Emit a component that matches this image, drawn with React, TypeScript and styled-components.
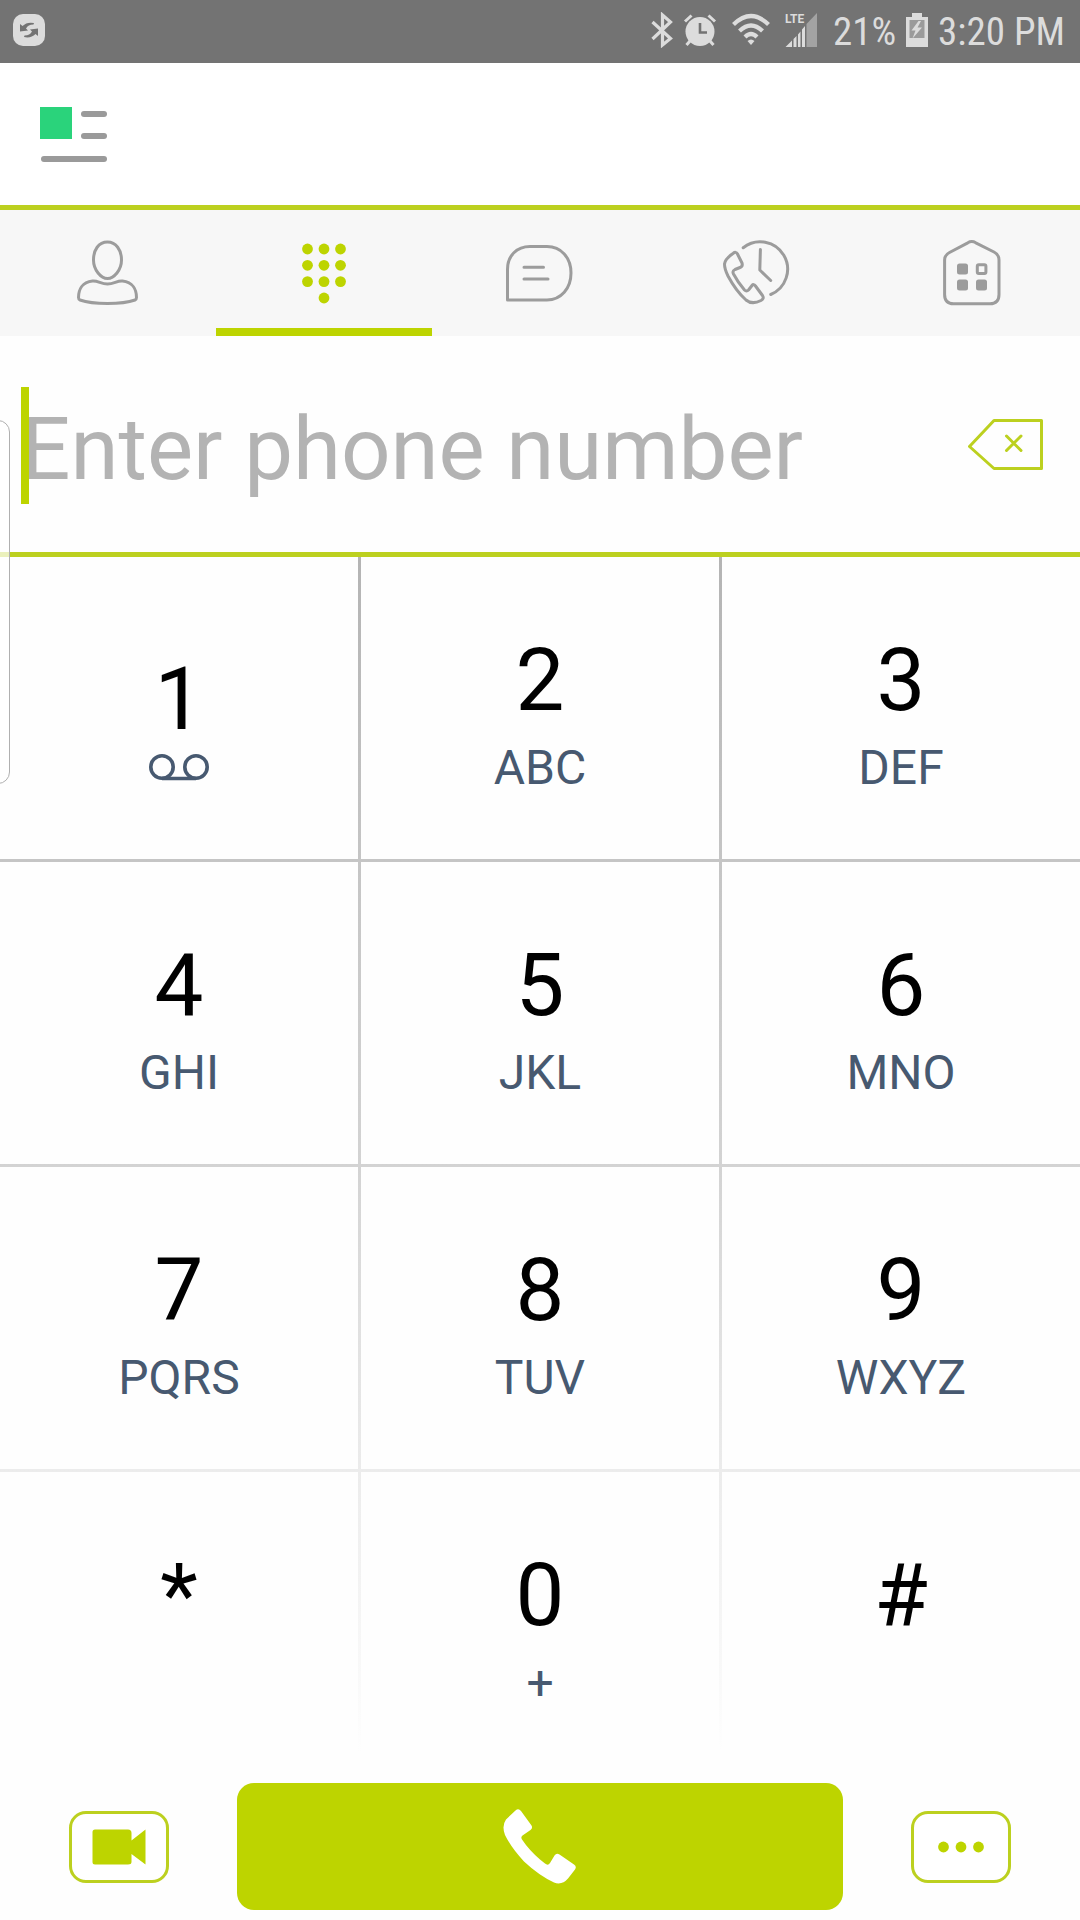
import React, { useState } from "react";
import styled, { createGlobalStyle, css } from "styled-components";

const accent = "#bdd400";
const line = "#bcd01f";
const iconGrey = "#9c9c9c";
const slate = "#475970";
const statusInk = "#dcdcdc";

const GlobalStyle = createGlobalStyle`
  *, *::before, *::after { box-sizing: border-box; }
  body { margin: 0; background: #fefefe; font-family: Roboto, "Liberation Sans", sans-serif; }
  button { margin: 0; padding: 0; border: 0; background: none; font: inherit; color: inherit; cursor: pointer; }
  svg { display: block; flex: none; }
`;

const Screen = styled.div`
  position: relative;
  display: flex;
  flex-direction: column;
  min-height: 100vh;
  overflow: hidden;
`;

const StatusBar = styled.div`
  display: flex;
  align-items: center;
  justify-content: space-between;
  height: 63px;
  padding: 0 15px 3px 13px;
  background: #737373;
  color: ${statusInk};
`;

const StatusGroup = styled.div`
  display: flex;
  align-items: center;
  gap: 10px;
`;

const StatusText = styled.span`
  padding-top: 4px;
  font-family: "Roboto Condensed", Roboto, sans-serif;
  font-size: 39px;
  line-height: 44px;
  white-space: nowrap;
`;

const SignalBox = styled.span`
  position: relative;
  margin-right: 6px;
`;

const NetworkLabel = styled.span`
  position: absolute;
  top: 0;
  left: 0;
  font-size: 12px;
  font-weight: 700;
  line-height: 12px;
`;

const Header = styled.header`
  display: flex;
  align-items: center;
  height: 147px;
  padding: 2px 40px 0;
  background: #fff;
  border-bottom: 5px solid ${line};
`;

const Tabs = styled.nav`
  display: grid;
  grid-template-columns: repeat(5, 1fr);
  background: #f7f7f7;
`;

const Tab = styled.button<{ $active?: boolean }>`
  display: flex;
  align-items: center;
  justify-content: center;
  height: 126px;
  color: ${(p) => (p.$active ? accent : iconGrey)};
  ${(p) =>
    p.$active &&
    css`
      box-shadow: inset 0 -8px 0 ${accent};
    `}
`;

const EntryRow = styled.div`
  display: flex;
  align-items: center;
  gap: 24px;
  padding: 51px 37px 48px 21px;
  border-bottom: 5px solid ${line};
`;

const Field = styled.label`
  position: relative;
  flex: 1;
  min-width: 0;
`;

const Caret = styled.span`
  position: absolute;
  top: 0;
  left: 0;
  width: 8px;
  height: 100%;
  background: ${accent};
`;

const NumberInput = styled.input`
  display: block;
  width: 100%;
  height: 117px;
  padding: 10px 0 3px;
  border: 0;
  outline: 0;
  background: transparent;
  caret-color: transparent;
  color: #000;
  font-family: inherit;
  font-size: 87px;
  line-height: 104px;
  &::placeholder {
    color: #b3b3b3;
    opacity: 1;
  }
`;

const Keypad = styled.main`
  display: grid;
  grid-template-columns: repeat(3, 1fr);
  gap: 3px;
  padding-bottom: 3px;
  background: linear-gradient(#b4b4b4 0%, #c5c5c5 25%, #d3d3d3 50%, #ececec 75%, #fefefe 98%);
`;

const Key = styled.button<{ $icon?: boolean }>`
  display: flex;
  flex-direction: column;
  align-items: center;
  justify-content: flex-start;
  gap: ${(p) => (p.$icon ? 2 : 8)}px;
  padding: ${(p) => (p.$icon ? "90px 0 0" : "71px 0 63px")};
  background: #fefefe;
`;

const Digit = styled.span`
  color: #000;
  font-size: 87px;
  line-height: 104px;
`;

const Letters = styled.span`
  color: ${slate};
  font-size: 48px;
  line-height: 56px;
`;

const Actions = styled.footer`
  display: flex;
  align-items: center;
  gap: 68px;
  padding: 6px 69px 10px;
`;

const SideButton = styled.button`
  display: flex;
  align-items: center;
  justify-content: center;
  width: 100px;
  height: 72px;
  border: 3px solid ${line};
  border-radius: 17px;
  background: #fff;
  color: ${accent};
`;

const CallButton = styled.button`
  display: flex;
  flex: 1;
  align-items: center;
  justify-content: center;
  height: 127px;
  border-radius: 17px;
  background: ${accent};
  color: #fff;
`;

const EdgeHandle = styled.div`
  position: absolute;
  top: 420px;
  left: -20px;
  width: 30px;
  height: 364px;
  border: 1px solid #b0b0b0;
  border-radius: 12px;
  background: rgba(255, 255, 255, 0.7);
`;

const stroke = {
  fill: "none",
  stroke: "currentColor",
  strokeWidth: 3,
  strokeLinecap: "round" as const,
  strokeLinejoin: "round" as const,
};

const TabIcon = ({ children }: { children: React.ReactNode }) => (
  <svg width="76" height="76" viewBox="0 0 76 76" aria-hidden="true" {...stroke}>
    {children}
  </svg>
);

const PersonIcon = () => (
  <TabIcon>
    <path d="M37.5 7C46 7 51.5 15 51.5 25C51.5 35 44 43.5 37.5 43.5C31 43.5 23.5 35 23.5 25C23.5 15 28.5 7 37.5 7Z" />
    <path d="M22.5 46C28 45.5 31 49 37.5 49C44 49 47 45.5 52.5 46C63 47 66.5 55 66.5 62.5Q66.5 64 65 65C58 67.5 48 68.5 37.5 68.5C27 68.5 17 67.5 10 65Q8.5 64 8.5 62.5C8.5 55 12 47 22.5 46Z" />
  </TabIcon>
);

const dots = [14, 30.3, 46.6].flatMap((y) => [21.5, 38, 54.5].map((x) => [x, y])).concat([[38, 63]]);

const DialpadIcon = () => (
  <TabIcon>
    {dots.map(([x, y]) => (
      <circle key={`${x}-${y}`} cx={x} cy={y} r="5.4" fill="currentColor" stroke="none" />
    ))}
  </TabIcon>
);

const ChatIcon = () => (
  <TabIcon>
    <path d="M5.5 65V34.5C5.5 20.5 15 11.5 28 11.5H45C59 11.5 69 22.500 69 38C69 53.500 59 65 45 65Z" />
    <path d="M22 32.200H41.500M22 44H46" />
  </TabIcon>
);

const HistoryIcon = () => (
  <TabIcon>
    <path d="M25.2 12.7A27.4 27.4 0 1 1 52.7 59.5" />
    <path d="M42.4 14.5L41.8 35L52.7 45.5" />
    <path d="M15 18.5Q18 16 19.5 19L24 28Q25 31.5 22 32.5L17 34.5Q14 36 15.5 39Q20 47.5 26.5 55Q28.5 57 30.5 55L34 50.5Q35.5 48.5 37.5 51L44.5 60.5Q46.5 63.5 43 65.5Q34 70 28 65Q18 56 10 41Q6.5 34 6.5 29Q7 24 15 18.5Z" />
  </TabIcon>
);

const BuildingIcon = () => (
  <TabIcon>
    <path d="M15.5 17.5L33.8 7.8Q37.8 5.4 41.8 7.8L60 17Q65 19.5 65 25V59.5Q65 68.8 56 68.8H19.5Q10.6 68.8 10.6 59.5V25Q10.6 20 15.5 17.5Z" />
    <g fill="currentColor" stroke="none">
      <rect x="23" y="28.5" width="11" height="11" rx="2.5" />
      <rect x="23" y="44.5" width="11" height="11" rx="2.5" />
      <rect x="42" y="44.5" width="11" height="11" rx="2.5" />
    </g>
    <rect x="43.3" y="29.8" width="8.6" height="8.6" rx="1.5" />
  </TabIcon>
);

const SyncIcon = () => (
  <svg width="32" height="32" viewBox="0 0 32 32" aria-hidden="true">
    <rect width="32" height="32" rx="10" fill={statusInk} />
    <g fill="#737373">
      <path d="M7 10L9.5 12Q14 7.500 21 9L20.500 10.500Q15 10.500 13 14.500L15 16.500L7 17.500Z" />
      <path d="M25 22L22.500 20Q18 24.500 11 23L11.500 21.500Q17 21.500 19 17.500L17 15.500L25 14.500Z" />
    </g>
  </svg>
);

const BluetoothIcon = () => (
  <svg width="22" height="36" viewBox="0 0 22 36" fill="none" stroke="currentColor" strokeWidth="3.2" aria-hidden="true">
    <path d="M1.500 10L19.500 26.500L11.500 33V3L19.500 10L1.500 27" />
  </svg>
);

const AlarmIcon = () => (
  <svg width="34" height="34" viewBox="0 0 34 34" aria-hidden="true">
    <g stroke="currentColor" strokeWidth="3" fill="none">
      <path d="M2 8.500L8.500 2.500M32 8.500L25.500 2.500M7 28L3.500 32M27 28L30.500 32" />
    </g>
    <circle cx="17" cy="18.500" r="14.500" fill="currentColor" />
    <path d="M17 10V19.500H24" fill="none" stroke="#737373" strokeWidth="2.600" />
  </svg>
);

const WifiIcon = () => (
  <svg width="48" height="34" viewBox="-5 0 48 34" fill="none" stroke="currentColor" aria-hidden="true">
    <path d="M1.500 11.500Q19 -5.500 36.500 11.500" strokeWidth="4.200" />
    <path d="M7.500 18Q19 7 30.500 18" strokeWidth="4.200" />
    <path d="M13 24Q19 18 25 24" strokeWidth="4.200" />
    <path d="M15.500 28Q19 25 22.500 28L19 32Z" fill="currentColor" stroke="none" />
  </svg>
);

const SignalIcon = () => (
  <svg width="32" height="34" viewBox="0 0 32 34" aria-hidden="true">
    <path d="M21.500 11L32 0V34H21.500Z" fill="#a3a3a3" />
    <path d="M0.500 34L7 27.500V34ZM8.500 26L11.500 23V34H8.500ZM13 21.500L15.500 18.500V34H13ZM17 16.500L20 13V34H17Z" fill="currentColor" />
  </svg>
);

const BatteryIcon = () => (
  <svg width="22" height="34" viewBox="0 0 22 34" aria-hidden="true">
    <path d="M6 0H16V4H22V34H0V4H6Z" fill="currentColor" />
    <rect x="3.500" y="7" width="15" height="18" fill="#9b9b9b" />
    <path d="M12.500 8L5.500 17.500H9.500L6.500 25.500L16 14.500H11.500L15 8Z" fill="currentColor" />
  </svg>
);

const LogoIcon = () => (
  <svg width="68" height="56" viewBox="0 0 68 56" aria-hidden="true">
    <rect width="32" height="32" fill="#2ad37b" />
    <g fill="#9a9a9a">
      <rect x="41" y="4" width="26" height="6" rx="3" />
      <rect x="41" y="26" width="26" height="6" rx="3" />
      <rect x="1" y="49" width="66" height="6" rx="3" />
    </g>
  </svg>
);

const BackspaceIcon = () => (
  <svg width="75" height="54" viewBox="0 0 75 54" fill="none" stroke={line} strokeWidth="3" strokeLinejoin="round" strokeLinecap="round" aria-hidden="true">
    <path d="M26 1.500H73.500V49.500H26L1.500 27.500Z" />
    <path d="M38.500 17L53 31.500M53 17L38.500 31.500" />
  </svg>
);

const VoicemailIcon = () => (
  <svg width="60" height="28" viewBox="0 0 60 28" fill="none" stroke={slate} strokeWidth="3.600" aria-hidden="true">
    <circle cx="13" cy="14" r="11.200" />
    <circle cx="47" cy="14" r="11.200" />
    <path d="M13 25.500H47" />
  </svg>
);

const VideoIcon = () => (
  <svg width="54" height="36" viewBox="0 0 54 36" fill="currentColor" aria-hidden="true">
    <path d="M3 0.500H36Q39.500 0.500 39.500 4V11.500L53.500 0.500V35.500L39.500 25V33Q39.500 35.500 36 35.500H3Q0.500 35.500 0.500 33V3Q0.500 0.500 3 0.500Z" />
  </svg>
);

const HandsetIcon = () => (
  <svg width="74" height="76" viewBox="0 0 74 76" fill="currentColor" aria-hidden="true">
    <path d="M12.500 1.500Q15.500 -1 18 2L28.500 16.500Q30 19 27.500 21L19.500 26.500Q17.500 28 19 30.500Q26 41 37 50.500L42 54.500Q45 57 47 54L51.500 46.500Q53.500 43.500 56.500 45.500L71 55.500Q74 57.500 72 60.500L65 69.500Q59 76.500 51 73.500Q36 66.500 21 52.500Q8 38.500 2 26Q-1.500 17 3 10.500Z" />
  </svg>
);

const MoreIcon = () => (
  <svg width="48" height="12" viewBox="0 0 48 12" fill="currentColor" aria-hidden="true">
    <circle cx="6.500" cy="6" r="5.400" />
    <circle cx="24" cy="6" r="5.400" />
    <circle cx="41.500" cy="6" r="5.400" />
  </svg>
);

const tabs = [
  { name: "Contacts", Icon: PersonIcon },
  { name: "Dial pad", Icon: DialpadIcon },
  { name: "Messages", Icon: ChatIcon },
  { name: "Call history", Icon: HistoryIcon },
  { name: "Office", Icon: BuildingIcon },
];

const keys: { digit: string; letters?: string; voicemail?: boolean }[] = [
  { digit: "1", voicemail: true },
  { digit: "2", letters: "ABC" },
  { digit: "3", letters: "DEF" },
  { digit: "4", letters: "GHI" },
  { digit: "5", letters: "JKL" },
  { digit: "6", letters: "MNO" },
  { digit: "7", letters: "PQRS" },
  { digit: "8", letters: "TUV" },
  { digit: "9", letters: "WXYZ" },
  { digit: "*" },
  { digit: "0", letters: "+" },
  { digit: "#" },
];

export default function App() {
  const [active, setActive] = useState("Dial pad");
  const [number, setNumber] = useState("");

  return (
    <Screen>
      <GlobalStyle />
      <StatusBar>
        <SyncIcon />
        <StatusGroup>
          <BluetoothIcon />
          <AlarmIcon />
          <WifiIcon />
          <SignalBox>
            <NetworkLabel>LTE</NetworkLabel>
            <SignalIcon />
          </SignalBox>
          <StatusText>21%</StatusText>
          <BatteryIcon />
          <StatusText>3:20 PM</StatusText>
        </StatusGroup>
      </StatusBar>

      <Header>
        <button type="button" aria-label="Menu">
          <LogoIcon />
        </button>
      </Header>

      <Tabs>
        {tabs.map(({ name, Icon }) => (
          <Tab key={name} type="button" aria-label={name} $active={name === active} onClick={() => setActive(name)}>
            <Icon />
          </Tab>
        ))}
      </Tabs>

      <EntryRow>
        <Field>
          <NumberInput
            type="tel"
            aria-label="Phone number"
            placeholder="Enter phone number"
            value={number}
            onChange={(e) => setNumber(e.target.value)}
          />
          {number === "" && <Caret />}
        </Field>
        <button type="button" aria-label="Delete" onClick={() => setNumber(number.slice(0, -1))}>
          <BackspaceIcon />
        </button>
      </EntryRow>

      <Keypad>
        {keys.map(({ digit, letters, voicemail }) => (
          <Key key={digit} type="button" $icon={voicemail} onClick={() => setNumber(number + digit)}>
            <Digit>{digit}</Digit>
            {letters && <Letters>{letters}</Letters>}
            {voicemail && <VoicemailIcon />}
          </Key>
        ))}
      </Keypad>

      <Actions>
        <SideButton type="button" aria-label="Video call">
          <VideoIcon />
        </SideButton>
        <CallButton type="button" aria-label="Call">
          <HandsetIcon />
        </CallButton>
        <SideButton type="button" aria-label="More">
          <MoreIcon />
        </SideButton>
      </Actions>

      <EdgeHandle />
    </Screen>
  );
}
